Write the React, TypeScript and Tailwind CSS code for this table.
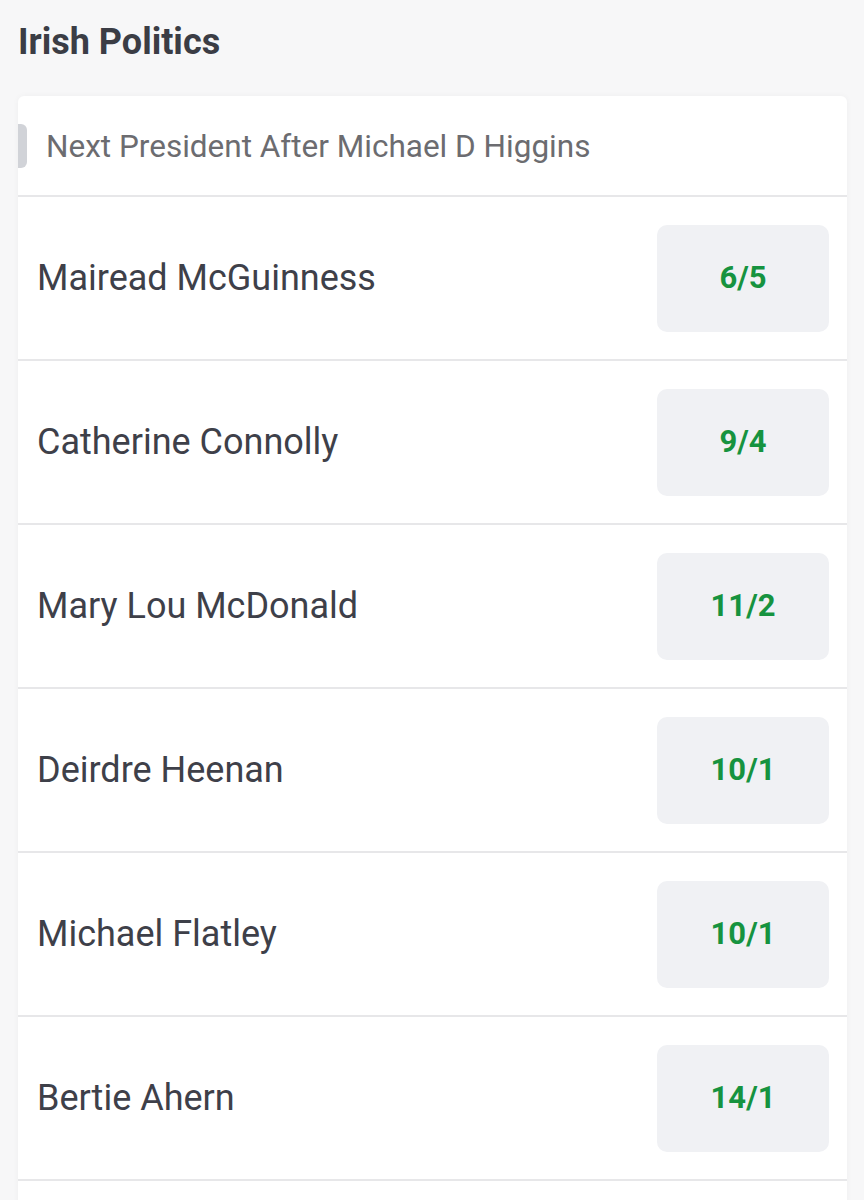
import React from "react";

const rows = [
  { name: "Mairead McGuinness", odds: "6/5" },
  { name: "Catherine Connolly", odds: "9/4" },
  { name: "Mary Lou McDonald", odds: "11/2" },
  { name: "Deirdre Heenan", odds: "10/1" },
  { name: "Michael Flatley", odds: "10/1" },
  { name: "Bertie Ahern", odds: "14/1" },
];

export default function App() {
  return (
    <div
      className="min-h-[1200px] w-[864px] bg-[#f7f7f8] overflow-hidden"
      style={{ fontFamily: "Roboto, 'Liberation Sans', sans-serif" }}
    >
      <div className="pl-[18px] pr-[17px] pt-[18px]">
        <h1 className="text-[36px] leading-[48px] font-bold text-[#3b3d45]">
          Irish Politics
        </h1>
        <div className="mt-[30px] bg-white rounded-t-[6px] shadow-[0_0_6px_rgba(0,0,0,0.04)]">
          <div className="h-[101px] flex items-center border-b-2 border-[#e7e7e9]">
            <div className="w-[9px] h-[44px] bg-[#d1d3d8] rounded-r-[6px]" />
            <div className="ml-[19px] text-[31.5px] text-[#6c6c70] mt-[3px]">
              Next President After Michael D Higgins
            </div>
          </div>
          {rows.map((r) => (
            <div
              key={r.name}
              className="h-[164px] flex items-center justify-between pl-[19px] pr-[18px] border-b-2 border-[#e7e7e9]"
            >
              <div className="text-[36px] text-[#3e4049]">{r.name}</div>
              <div className="w-[172px] h-[107px] rounded-[10px] bg-[#f0f1f4] flex items-center justify-center">
                <span className="text-[31px] font-bold text-[#16933f]">{r.odds}</span>
              </div>
            </div>
          ))}
          <div className="h-[40px]" />
        </div>
      </div>
    </div>
  );
}
